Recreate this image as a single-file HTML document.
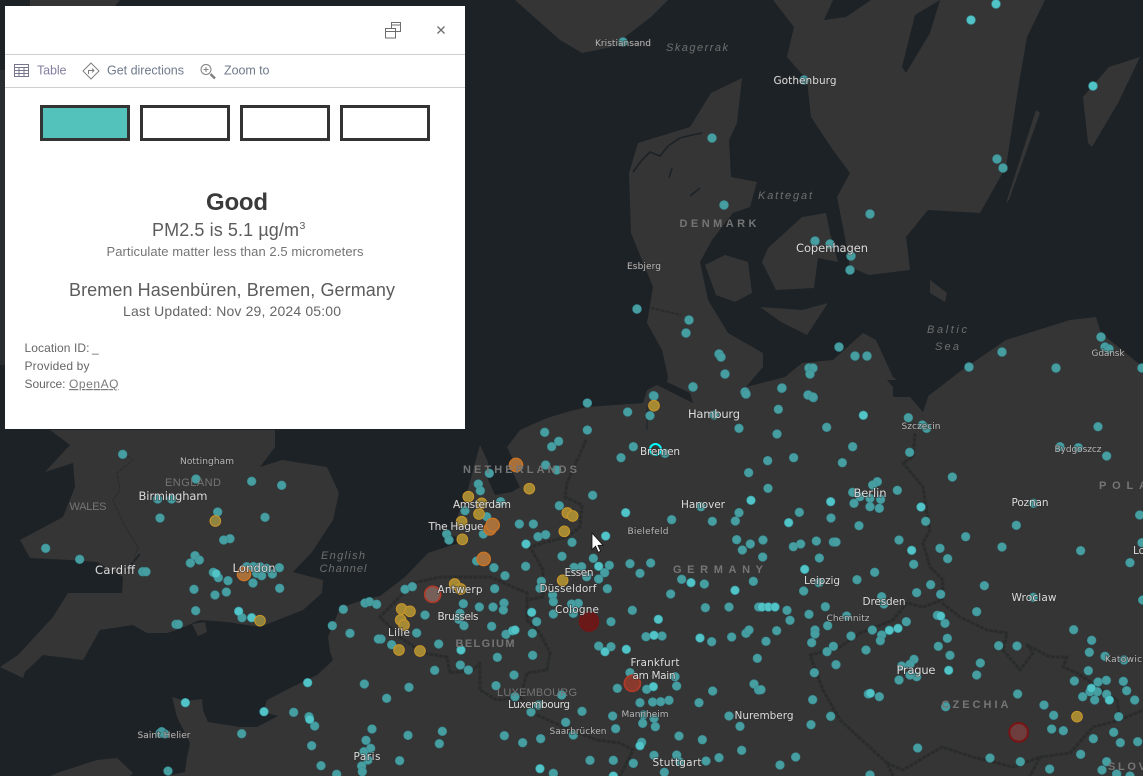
<!DOCTYPE html>
<html><head><meta charset="utf-8"><title>Air quality map</title>
<style>
html,body{margin:0;padding:0;background:#1c2226;width:1143px;height:776px;overflow:hidden}
svg{position:absolute;left:0;top:0;display:block}
text{font-family:"Liberation Sans",sans-serif}
text.c,text.m{font-family:"DejaVu Sans",sans-serif}
.c{fill:#dcdcdc;font-size:10.5px;text-anchor:middle;paint-order:stroke;stroke:#2e2e2e;stroke-width:1.5px;stroke-opacity:.6}
.l{font-size:11.5px}
.m{fill:#b8b8b8;font-size:9px;text-anchor:middle;paint-order:stroke;stroke:#2e2e2e;stroke-width:1.5px;stroke-opacity:.6}
.r{fill:#757575;font-size:11px;font-weight:bold;text-anchor:middle}
.q{fill:#6f6f6f;font-size:11px;font-style:italic;text-anchor:middle}
.p{fill:#6f7a8c;font-size:12.5px}
.z circle{r:13px}
.y circle{r:4.4px}
</style></head><body>
<svg width="1143" height="776" viewBox="0 0 1143 776" xmlns="http://www.w3.org/2000/svg">
<rect width="1143" height="776" fill="#1c2226"/>
<g fill="#353535">
<path d="M50,430L70,445L45,472L73,463L75,487L63,517L20,540L30,558L70,560L97,562L123,577L122,593L68,593L53,617L18,655L0,667L23,678L25,672L43,655L83,660L100,630L133,625L147,633L167,633L177,630L200,620L227,622L260,627L303,610L322,593L323,580L293,572L312,552L333,520L339,493L327,467L282,460L260,467L275,447L275,430Z"/>
<path d="M192,624L205,622L207,632L198,636Z"/>
<path d="M50,776L60,772L97,760L117,758L133,773L130,776Z"/>
<path d="M167,776L185,772L187,757L190,743L177,717L172,697L185,701L202,699L203,710L208,722L240,727L257,727L278,716L263,712L267,700L290,688L317,675L328,665L333,660L330,652L328,637L333,625L340,608L363,600L380,596L405,577L428,553L443,543L452,530L467,493L475,463L480,445L488,462L487,477L495,495L512,492L520,487L513,473L513,460L507,447L520,430L547,418L567,412L587,407L643,403L647,390L657,385L673,393L693,403L690,393L667,382L668,377L662,350L647,323L653,287L631,233L629,173L638,143L690,127L711,93L742,78L737,123L729,140L731,177L757,182L750,207L733,213L712,240L700,262L708,300L728,333L763,353L763,367L746,387L785,377L802,363L833,360L863,333L876,340L893,377L910,390L923,400L962,370L1006,340L1070,320L1096,317L1101,333L1143,367L1143,776Z"/>
<path d="M705,265L725,255L748,262L752,293L735,302L716,295Z"/>
<path d="M762,262L768,248L790,228L802,217L826,213L830,233L838,262L818,258L814,288L776,290Z"/>
<path d="M760,307L802,310L828,303L807,335L781,322Z"/>
<path d="M773,0L794,27L787,57L807,80L811,117L833,150L850,173L837,197L841,217L846,243L850,267L869,275L910,270L906,237L928,210L980,213L1006,167L1019,83L1027,37L1045,0Z"/>
<path d="M1036,110L1006,203L1009,200L1040,113Z"/>
<path d="M1140,57L1109,67L1083,97L1088,143L1092,147L1118,103Z"/>
<path d="M930,280L947,293L945,302L930,293Z"/>
<path d="M515,0L534,17L560,40L582,53L612,47L651,17L668,0Z"/>
<path d="M30,0L120,0L115,6L30,6Z"/>
<path d="M0,70H5V365H0Z" fill="#2b2e30"/>
</g>
<g fill="#1c2226">
<path d="M833,0L824,20L846,17L871,0Z"/>
<path d="M940,0L915,15L902,67L906,73L930,33Z"/>
<path d="M887,380L933,380L927,400L923,412L910,397L893,397L893,387Z"/>
<path d="M428,553L452,545L470,540L452,536L443,543Z"/>
</g>
<g fill="none" stroke="#1c2226">
<path d="M633,172L642,160L650,152L660,156L668,146L680,138L692,135L702,133" stroke-width="1.6"/>
<path d="M647,407V430" stroke-width="1"/>
<path d="M669,178L672,168M690,196L700,188" stroke-width="1.5"/>
<path d="M140,554L125,572" stroke-width="1.5"/>
</g>
<g fill="none" stroke="#2a2b2b" stroke-width="3" stroke-linejoin="round" stroke-dasharray="4 1">
<path d="M586,440L567,483L565,497L582,505L580,527L567,537L543,543L530,547L543,570L543,597L527,600"/>
<path d="M527,600L527,593L513,587L490,577L463,577L440,577L413,583L380,617L400,637L423,653L447,657L450,673L473,670L480,663L480,690L497,700L520,697"/>
<path d="M520,697L527,673L547,670L550,653L540,633L527,620L527,600"/>
<path d="M520,697L533,713L563,727L597,740L620,743L633,750L620,776"/>
<path d="M915,433L913,457L903,463L923,487L927,513L930,530L923,543L930,567L943,580L942,600L923,607L907,603L893,620L860,633L840,647L810,655L823,690L840,720L887,763L893,776"/>
<path d="M942,603L960,617L987,630L1007,633L1003,650L1020,670L1033,653L1027,645L1050,657L1067,657L1063,667L1077,673L1117,700L1120,720L1143,710"/>
<path d="M887,763L903,770L942,747L973,757L1013,767L1040,757L1070,753L1093,727L1120,720"/>
<path d="M1040,757L1030,776"/>
<path d="M651,308L681,315" stroke-width="2"/>
<path d="M123,453L133,460L117,473L120,490L113,500L123,523L138,547L133,563" stroke-width="1"/>
</g>

<g class="z" transform="translate(380 380) scale(.33333)" fill="#479ea1" stroke="#3a8f96" stroke-width="2">
<circle cx="820" cy="47" r="12"/><circle cx="939" cy="20" r="12"/><circle cx="1096" cy="38" r="12"/><circle cx="622" cy="69" r="12"/><circle cx="743" cy="96" r="12"/><circle cx="810" cy="107" r="12"/><circle cx="1003" cy="105" r="12"/><circle cx="622" cy="150" r="12"/><circle cx="494" cy="157" r="12"/><circle cx="1077" cy="145" r="12"/><circle cx="536" cy="184" r="12"/><circle cx="515" cy="200" r="12"/><circle cx="760" cy="200" r="12"/><circle cx="723" cy="233" r="12"/><circle cx="855" cy="220" r="12"/><circle cx="1106" cy="278" r="12"/><circle cx="497" cy="255" r="12"/><circle cx="530" cy="270" r="12"/><circle cx="328" cy="280" r="12"/><circle cx="295" cy="312" r="12"/><circle cx="301" cy="332" r="12"/><circle cx="362" cy="365" r="12"/><circle cx="638" cy="346" r="12"/><circle cx="538" cy="377" r="12"/><circle cx="255" cy="392" r="12"/><circle cx="320" cy="410" r="12"/><circle cx="875" cy="419" r="12"/><circle cx="997" cy="424" r="12"/><circle cx="1077" cy="398" r="12"/><circle cx="1066" cy="423" r="12"/><circle cx="963" cy="380" r="12"/><circle cx="418" cy="432" r="12"/><circle cx="460" cy="432" r="12"/><circle cx="200" cy="462" r="12"/><circle cx="207" cy="480" r="12"/><circle cx="474" cy="470" r="12"/><circle cx="497" cy="464" r="12"/><circle cx="310" cy="462" r="12"/><circle cx="576" cy="487" r="12"/><circle cx="1070" cy="479" r="12"/><circle cx="1111" cy="492" r="12"/><circle cx="1087" cy="510" r="12"/><circle cx="546" cy="529" r="12"/><circle cx="640" cy="535" r="12"/><circle cx="290" cy="543" r="12"/><circle cx="342" cy="563" r="12"/><circle cx="437" cy="559" r="12"/><circle cx="750" cy="551" r="12"/><circle cx="812" cy="549" r="12"/><circle cx="688" cy="556" r="12"/><circle cx="605" cy="560" r="12"/><circle cx="582" cy="562" r="12"/><circle cx="674" cy="578" r="12"/><circle cx="780" cy="580" r="12"/><circle cx="375" cy="587" r="12"/><circle cx="905" cy="598" r="12"/><circle cx="973" cy="612" r="12"/><circle cx="656" cy="597" r="12"/><circle cx="620" cy="590" r="12"/><circle cx="484" cy="604" r="12"/><circle cx="1120" cy="604" r="12"/><circle cx="75" cy="628" r="12"/><circle cx="97" cy="620" r="12"/><circle cx="344" cy="626" r="12"/><circle cx="682" cy="626" r="12"/><circle cx="480" cy="625" r="12"/><circle cx="872" cy="642" r="12"/><circle cx="518" cy="645" r="12"/><circle cx="520" cy="665" r="12"/><circle cx="372" cy="669" r="12"/><circle cx="370" cy="690" r="12"/><circle cx="339" cy="681" r="12"/><circle cx="298" cy="681" r="12"/><circle cx="250" cy="671" r="12"/><circle cx="976" cy="683" r="12"/><circle cx="1047" cy="681" r="12"/><circle cx="757" cy="691" r="12"/><circle cx="1136" cy="681" r="12"/><circle cx="595" cy="670" r="12"/><circle cx="575" cy="672" r="12"/><circle cx="580" cy="700" r="12"/><circle cx="520" cy="702" r="12"/><circle cx="135" cy="705" r="12"/><circle cx="240" cy="700" r="12"/><circle cx="236" cy="718" r="12"/><circle cx="470" cy="725" r="12"/><circle cx="693" cy="725" r="12"/><circle cx="252" cy="737" r="12"/><circle cx="335" cy="739" r="12"/><circle cx="110" cy="759" r="12"/><circle cx="378" cy="763" r="12"/><circle cx="457" cy="760" r="12"/><circle cx="995" cy="785" r="12"/><circle cx="1055" cy="771" r="12"/><circle cx="1098" cy="760" r="12"/><circle cx="1107" cy="750" r="12"/><circle cx="798" cy="770" r="12"/><circle cx="846" cy="768" r="12"/><circle cx="3" cy="777" r="12"/><circle cx="35" cy="794" r="12"/><circle cx="176" cy="792" r="12"/><circle cx="656" cy="798" r="12"/><circle cx="693" cy="800" r="12"/><circle cx="352" cy="832" r="12"/><circle cx="458" cy="826" r="12"/><circle cx="1132" cy="835" r="12"/><circle cx="241" cy="855" r="12"/><circle cx="265" cy="870" r="12"/><circle cx="164" cy="871" r="12"/><circle cx="402" cy="885" r="12"/><circle cx="750" cy="878" r="12"/><circle cx="885" cy="890" r="12"/><circle cx="890" cy="918" r="12"/><circle cx="712" cy="925" r="12"/><circle cx="800" cy="928" r="12"/><circle cx="348" cy="917" r="12"/><circle cx="87" cy="922" r="12"/><circle cx="20" cy="955" r="12"/><circle cx="998" cy="933" r="12"/><circle cx="1122" cy="912" r="12"/><circle cx="1136" cy="930" r="12"/><circle cx="780" cy="968" r="12"/><circle cx="818" cy="966" r="12"/><circle cx="842" cy="965" r="12"/><circle cx="867" cy="961" r="12"/><circle cx="957" cy="968" r="12"/><circle cx="405" cy="950" r="12"/><circle cx="545" cy="945" r="12"/><circle cx="475" cy="975" r="12"/><circle cx="453" cy="996" r="12"/><circle cx="606" cy="994" r="12"/><circle cx="698" cy="1008" r="12"/><circle cx="790" cy="1005" r="12"/><circle cx="822" cy="1015" r="12"/><circle cx="1047" cy="1008" r="12"/><circle cx="557" cy="1027" r="12"/><circle cx="788" cy="1030" r="12"/><circle cx="826" cy="1040" r="12"/><circle cx="707" cy="1046" r="12"/><circle cx="1080" cy="1039" r="12"/><circle cx="580" cy="1065" r="12"/><circle cx="373" cy="1067" r="12"/><circle cx="84" cy="1066" r="12"/><circle cx="187" cy="1054" r="12"/><circle cx="178" cy="1091" r="12"/><circle cx="428" cy="1088" r="12"/><circle cx="482" cy="1076" r="12"/><circle cx="897" cy="1068" r="12"/><circle cx="967" cy="1079" r="12"/><circle cx="785" cy="1087" r="12"/><circle cx="1085" cy="1111" r="12"/><circle cx="1017" cy="1133" r="12"/><circle cx="978" cy="1143" r="12"/><circle cx="890" cy="1125" r="12"/><circle cx="822" cy="1126" r="12"/><circle cx="59" cy="1142" r="12"/><circle cx="630" cy="1141" r="12"/><circle cx="700" cy="1141" r="12"/><circle cx="760" cy="1150" r="12"/><circle cx="898" cy="1145" r="12"/><circle cx="853" cy="1177" r="12"/><circle cx="520" cy="1180" r="12"/>
</g>
<g class="z" transform="translate(380 380) scale(.33333)" fill="#52c4c7" stroke="#3a9aa0" stroke-width="2">
<circle cx="1113" cy="361" r="12"/><circle cx="737" cy="398" r="12"/><circle cx="677" cy="468" r="12"/><circle cx="438" cy="492" r="12"/><circle cx="656" cy="559" r="12"/><circle cx="933" cy="608" r="12"/><circle cx="1065" cy="631" r="12"/><circle cx="455" cy="697" r="12"/><circle cx="835" cy="718" r="12"/><circle cx="398" cy="752" r="12"/><circle cx="405" cy="750" r="12"/><circle cx="960" cy="774" r="12"/><circle cx="822" cy="766" r="12"/><circle cx="243" cy="810" r="12"/><circle cx="739" cy="808" r="12"/><circle cx="675" cy="815" r="12"/><circle cx="820" cy="920" r="12"/><circle cx="780" cy="1097" r="12"/><circle cx="480" cy="1166" r="12"/><circle cx="700" cy="1188" r="12"/>
</g>
<g class="z" transform="translate(760 380) scale(.33333)" fill="#479ea1" stroke="#3a8f96" stroke-width="2">
<circle cx="65" cy="25" r="12"/><circle cx="145" cy="45" r="12"/><circle cx="160" cy="53" r="12"/><circle cx="55" cy="88" r="12"/><circle cx="200" cy="142" r="12"/><circle cx="51" cy="162" r="12"/><circle cx="445" cy="113" r="12"/><circle cx="487" cy="135" r="12"/><circle cx="500" cy="145" r="12"/><circle cx="1014" cy="140" r="12"/><circle cx="278" cy="200" r="12"/><circle cx="900" cy="200" r="12"/><circle cx="955" cy="203" r="12"/><circle cx="1040" cy="228" r="12"/><circle cx="101" cy="233" r="12"/><circle cx="23" cy="242" r="12"/><circle cx="247" cy="248" r="12"/><circle cx="449" cy="217" r="12"/><circle cx="577" cy="291" r="12"/><circle cx="24" cy="325" r="12"/><circle cx="412" cy="331" r="12"/><circle cx="352" cy="305" r="12"/><circle cx="338" cy="315" r="12"/><circle cx="278" cy="337" r="12"/><circle cx="330" cy="355" r="12"/><circle cx="300" cy="350" r="12"/><circle cx="362" cy="358" r="12"/><circle cx="330" cy="380" r="12"/><circle cx="358" cy="385" r="12"/><circle cx="282" cy="370" r="12"/><circle cx="118" cy="397" r="12"/><circle cx="213" cy="414" r="12"/><circle cx="297" cy="437" r="12"/><circle cx="497" cy="424" r="12"/><circle cx="769" cy="436" r="12"/><circle cx="1139" cy="405" r="12"/><circle cx="820" cy="370" r="12"/><circle cx="617" cy="470" r="12"/><circle cx="726" cy="501" r="12"/><circle cx="9" cy="480" r="12"/><circle cx="100" cy="500" r="12"/><circle cx="122" cy="492" r="12"/><circle cx="169" cy="483" r="12"/><circle cx="220" cy="486" r="12"/><circle cx="228" cy="486" r="12"/><circle cx="417" cy="480" r="12"/><circle cx="540" cy="505" r="12"/><circle cx="563" cy="536" r="12"/><circle cx="962" cy="512" r="12"/><circle cx="1110" cy="548" r="12"/><circle cx="1146" cy="488" r="12"/><circle cx="8" cy="531" r="12"/><circle cx="178" cy="534" r="12"/><circle cx="461" cy="553" r="12"/><circle cx="344" cy="577" r="12"/><circle cx="291" cy="599" r="12"/><circle cx="177" cy="608" r="12"/><circle cx="673" cy="617" r="12"/><circle cx="512" cy="614" r="12"/><circle cx="131" cy="633" r="12"/><circle cx="470" cy="638" r="12"/><circle cx="542" cy="643" r="12"/><circle cx="365" cy="650" r="12"/><circle cx="372" cy="672" r="12"/><circle cx="820" cy="652" r="12"/><circle cx="1148" cy="660" r="12"/><circle cx="196" cy="680" r="12"/><circle cx="650" cy="695" r="12"/><circle cx="81" cy="691" r="12"/><circle cx="90" cy="721" r="12"/><circle cx="147" cy="703" r="12"/><circle cx="260" cy="708" r="12"/><circle cx="532" cy="706" r="12"/><circle cx="555" cy="730" r="12"/><circle cx="439" cy="725" r="12"/><circle cx="203" cy="737" r="12"/><circle cx="50" cy="752" r="12"/><circle cx="165" cy="750" r="12"/><circle cx="165" cy="762" r="12"/><circle cx="337" cy="750" r="12"/><circle cx="365" cy="765" r="12"/><circle cx="361" cy="782" r="12"/><circle cx="273" cy="768" r="12"/><circle cx="18" cy="784" r="12"/><circle cx="155" cy="788" r="12"/><circle cx="220" cy="799" r="12"/><circle cx="201" cy="815" r="12"/><circle cx="318" cy="810" r="12"/><circle cx="562" cy="775" r="12"/><circle cx="535" cy="799" r="12"/><circle cx="716" cy="797" r="12"/><circle cx="771" cy="798" r="12"/><circle cx="941" cy="749" r="12"/><circle cx="995" cy="781" r="12"/><circle cx="988" cy="817" r="12"/><circle cx="1035" cy="829" r="12"/><circle cx="1092" cy="840" r="12"/><circle cx="570" cy="826" r="12"/><circle cx="462" cy="838" r="12"/><circle cx="425" cy="858" r="12"/><circle cx="450" cy="853" r="12"/><circle cx="228" cy="854" r="12"/><circle cx="661" cy="849" r="12"/><circle cx="163" cy="878" r="12"/><circle cx="985" cy="872" r="12"/><circle cx="650" cy="885" r="12"/><circle cx="470" cy="890" r="12"/><circle cx="450" cy="885" r="12"/><circle cx="417" cy="900" r="12"/><circle cx="943" cy="903" r="12"/><circle cx="1014" cy="906" r="12"/><circle cx="1039" cy="901" r="12"/><circle cx="1090" cy="904" r="12"/><circle cx="1100" cy="932" r="12"/><circle cx="990" cy="935" r="12"/><circle cx="1012" cy="935" r="12"/><circle cx="1040" cy="943" r="12"/><circle cx="968" cy="950" r="12"/><circle cx="1004" cy="960" r="12"/><circle cx="1124" cy="960" r="12"/><circle cx="773" cy="942" r="12"/><circle cx="325" cy="942" r="12"/><circle cx="358" cy="950" r="12"/><circle cx="3" cy="929" r="12"/><circle cx="158" cy="959" r="12"/><circle cx="852" cy="975" r="12"/><circle cx="557" cy="980" r="12"/><circle cx="881" cy="1006" r="12"/><circle cx="1076" cy="1010" r="12"/><circle cx="212" cy="1009" r="12"/><circle cx="153" cy="1034" r="12"/><circle cx="875" cy="1047" r="12"/><circle cx="910" cy="1052" r="12"/><circle cx="1061" cy="1057" r="12"/><circle cx="1000" cy="1076" r="12"/><circle cx="1081" cy="1088" r="12"/><circle cx="1133" cy="1085" r="12"/><circle cx="473" cy="1104" r="12"/><circle cx="962" cy="1123" r="12"/><circle cx="107" cy="1131" r="12"/><circle cx="60" cy="1155" r="12"/><circle cx="690" cy="1134" r="12"/><circle cx="781" cy="1145" r="12"/><circle cx="869" cy="1167" r="12"/><circle cx="1040" cy="1145" r="12"/><circle cx="1026" cy="1170" r="12"/><circle cx="1070" cy="1182" r="12"/><circle cx="330" cy="1185" r="12"/><circle cx="1110" cy="1188" r="12"/>
</g>
<g class="z" transform="translate(760 380) scale(.33333)" fill="#52c4c7" stroke="#3a9aa0" stroke-width="2">
<circle cx="310" cy="106" r="12"/><circle cx="212" cy="365" r="12"/><circle cx="483" cy="381" r="12"/><circle cx="86" cy="428" r="12"/><circle cx="455" cy="511" r="12"/><circle cx="134" cy="568" r="12"/><circle cx="6" cy="681" r="12"/><circle cx="25" cy="681" r="12"/><circle cx="45" cy="681" r="12"/><circle cx="542" cy="708" r="12"/><circle cx="388" cy="751" r="12"/><circle cx="414" cy="745" r="12"/><circle cx="566" cy="871" r="12"/><circle cx="994" cy="925" r="12"/><circle cx="1048" cy="960" r="12"/><circle cx="331" cy="940" r="12"/>
</g>
<g class="z" transform="translate(0 430) scale(.33333)" fill="#479ea1" stroke="#3a8f96" stroke-width="2">
<circle cx="368" cy="73" r="12"/><circle cx="588" cy="147" r="12"/><circle cx="755" cy="154" r="12"/><circle cx="845" cy="166" r="12"/><circle cx="473" cy="207" r="12"/><circle cx="515" cy="207" r="12"/><circle cx="653" cy="246" r="12"/><circle cx="480" cy="264" r="12"/><circle cx="795" cy="262" r="12"/><circle cx="690" cy="326" r="12"/><circle cx="671" cy="330" r="12"/><circle cx="137" cy="355" r="12"/><circle cx="239" cy="388" r="12"/><circle cx="585" cy="377" r="12"/><circle cx="598" cy="390" r="12"/><circle cx="571" cy="399" r="12"/><circle cx="428" cy="425" r="12"/><circle cx="438" cy="425" r="12"/><circle cx="640" cy="427" r="12"/><circle cx="655" cy="443" r="12"/><circle cx="684" cy="452" r="12"/><circle cx="740" cy="410" r="12"/><circle cx="760" cy="410" r="12"/><circle cx="780" cy="410" r="12"/><circle cx="800" cy="415" r="12"/><circle cx="838" cy="413" r="12"/><circle cx="770" cy="430" r="12"/><circle cx="785" cy="437" r="12"/><circle cx="817" cy="432" r="12"/><circle cx="759" cy="459" r="12"/><circle cx="582" cy="478" r="12"/><circle cx="679" cy="486" r="12"/><circle cx="645" cy="495" r="12"/><circle cx="839" cy="475" r="12"/><circle cx="587" cy="542" r="12"/><circle cx="726" cy="563" r="12"/><circle cx="1095" cy="519" r="12"/><circle cx="1108" cy="515" r="12"/><circle cx="1130" cy="523" r="12"/><circle cx="1030" cy="538" r="12"/><circle cx="997" cy="587" r="12"/><circle cx="1050" cy="610" r="12"/><circle cx="1135" cy="627" r="12"/><circle cx="528" cy="583" r="12"/><circle cx="535" cy="583" r="12"/><circle cx="1093" cy="762" r="12"/><circle cx="881" cy="847" r="12"/><circle cx="927" cy="860" r="12"/><circle cx="944" cy="888" r="12"/><circle cx="1116" cy="897" r="12"/><circle cx="725" cy="911" r="12"/><circle cx="485" cy="905" r="12"/><circle cx="480" cy="910" r="12"/><circle cx="495" cy="912" r="12"/><circle cx="935" cy="947" r="12"/><circle cx="1098" cy="931" r="12"/><circle cx="1112" cy="955" r="12"/><circle cx="1092" cy="965" r="12"/><circle cx="1085" cy="1008" r="12"/><circle cx="1104" cy="990" r="12"/><circle cx="963" cy="1007" r="12"/><circle cx="504" cy="1023" r="12"/><circle cx="1010" cy="1033" r="12"/><circle cx="1087" cy="1025" r="12"/>
</g>
<g class="z" transform="translate(0 430) scale(.33333)" fill="#52c4c7" stroke="#3a9aa0" stroke-width="2">
<circle cx="648" cy="431" r="12"/><circle cx="716" cy="544" r="12"/><circle cx="755" cy="563" r="12"/><circle cx="923" cy="758" r="12"/><circle cx="792" cy="845" r="12"/><circle cx="929" cy="868" r="12"/><circle cx="556" cy="818" r="12"/>
</g>
<g class="y" fill="#479ea1" stroke="#3a8f96" stroke-width=".7">
<circle cx="712" cy="138" r="4"/><circle cx="997" cy="159" r="4"/><circle cx="1003" cy="168" r="4"/><circle cx="724" cy="205" r="4"/><circle cx="870" cy="214" r="4"/><circle cx="815" cy="241" r="4"/><circle cx="830" cy="244" r="4"/><circle cx="851" cy="256" r="4"/><circle cx="850" cy="270" r="4"/><circle cx="637" cy="309" r="4"/><circle cx="689" cy="320" r="4"/><circle cx="686" cy="333" r="4"/><circle cx="719" cy="354" r="4"/><circle cx="721" cy="357" r="4"/><circle cx="725" cy="374" r="4"/><circle cx="693" cy="387" r="4"/><circle cx="745" cy="392" r="4"/><circle cx="746" cy="394" r="4"/><circle cx="782" cy="388" r="4"/><circle cx="839" cy="347" r="4"/><circle cx="855" cy="356" r="4"/><circle cx="867" cy="356" r="4"/><circle cx="809" cy="368" r="4"/><circle cx="813" cy="368" r="4"/><circle cx="810" cy="374" r="4"/><circle cx="808" cy="395" r="4"/><circle cx="813" cy="397" r="4"/><circle cx="969" cy="367" r="4"/><circle cx="1002" cy="352" r="4"/><circle cx="1056" cy="368" r="4"/><circle cx="1101" cy="337" r="4"/><circle cx="1105" cy="347" r="4"/><circle cx="1109" cy="349" r="4"/><circle cx="1142" cy="368" r="4"/><circle cx="654" cy="396" r="4"/><circle cx="623" cy="42" r="4"/><circle cx="804" cy="80" r="4"/>
</g>
<g class="y" fill="#52c4c7" stroke="#3a9aa0" stroke-width=".7">
<circle cx="996" cy="4" r="4"/><circle cx="971" cy="20" r="4"/><circle cx="1093" cy="86" r="4"/>
</g>
<g transform="translate(380 380) scale(.33333)" fill="#a68a33" stroke="#c9962a" stroke-width="3">
<circle cx="822" cy="77" r="16"/><circle cx="448" cy="326" r="16"/><circle cx="562" cy="399" r="16"/><circle cx="578" cy="408" r="16"/><circle cx="553" cy="454" r="16"/><circle cx="548" cy="601" r="16"/><circle cx="265" cy="350" r="16"/><circle cx="305" cy="370" r="16"/><circle cx="297" cy="402" r="16"/><circle cx="245" cy="425" r="16"/><circle cx="247" cy="478" r="16"/><circle cx="224" cy="612" r="16"/><circle cx="242" cy="627" r="16"/><circle cx="65" cy="687" r="16"/><circle cx="90" cy="694" r="16"/><circle cx="62" cy="720" r="16"/><circle cx="72" cy="735" r="16"/><circle cx="57" cy="810" r="16"/><circle cx="120" cy="813" r="16"/>
</g>
<g transform="translate(380 380) scale(.33333)" fill="#a8703a" stroke="#cc7424" stroke-width="4">
<circle cx="408" cy="255" r="20"/><circle cx="330" cy="447" r="18"/><circle cx="338" cy="435" r="20"/><circle cx="311" cy="537" r="20"/>
</g>
<g transform="translate(380 380) scale(.33333)">
<circle cx="158" cy="643" r="24" fill="#77605a" stroke="#b03a2a" stroke-width="5"/>
<circle cx="757" cy="910" r="24" fill="#8a3a2c" stroke="#b03a2a" stroke-width="5"/>
<circle cx="627" cy="725" r="29" fill="#6a1818" stroke="#761414" stroke-width="3"/>
</g>
<g transform="translate(760 380) scale(.33333)">
<circle cx="776" cy="1057" r="28" fill="#6e3e3e" stroke="#7a1414" stroke-width="6"/>
<circle cx="951" cy="1010" r="16" fill="#a68a33" stroke="#c9962a" stroke-width="3"/>
</g>
<g transform="translate(0 430) scale(.33333)">
<circle cx="646" cy="273" r="16" fill="#8f8440" stroke="#c9962a" stroke-width="3"/>
<circle cx="780" cy="572" r="16" fill="#8f8440" stroke="#c9962a" stroke-width="3"/>
<circle cx="732" cy="432" r="20" fill="#a8703a" stroke="#cc7424" stroke-width="4"/>
</g>
<circle cx="655.5" cy="449.5" r="5.5" fill="none" stroke="#00ffff" stroke-width="2"/>

<text class="m" x="623" y="46" textLength="56">Kristiansand</text>
<text class="q" x="697" y="51" textLength="62">Skagerrak</text>
<text class="c" x="805" y="84" textLength="63">Gothenburg</text>
<text class="q" x="785" y="199" textLength="54">Kattegat</text>
<text class="r" x="718" y="227" textLength="77">DENMARK</text>
<text class="m" x="644" y="269" textLength="34">Esbjerg</text>
<text class="c l" x="832" y="252" textLength="72">Copenhagen</text>
<text class="q" x="947" y="333" textLength="40">Baltic</text>
<text class="q" x="947" y="350" textLength="24">Sea</text>
<text class="m" x="1108" y="356" textLength="33">Gdansk</text>
<text class="c l" x="714" y="418" textLength="52">Hamburg</text>
<text class="c" x="660" y="455" textLength="40">Bremen</text>
<text class="m" x="921" y="429" textLength="39">Szczecin</text>
<text class="m" x="1078" y="452" textLength="47">Bydgoszcz</text>
<text class="r" x="520" y="473" textLength="114">NETHERLANDS</text>
<text class="c" x="482" y="508" textLength="58">Amsterdam</text>
<text class="c" x="456" y="530" textLength="55">The Hague</text>
<text class="c" x="703" y="508" textLength="44">Hanover</text>
<text class="m" x="648" y="534" textLength="41">Bielefeld</text>
<text class="c l" x="870" y="497" textLength="33">Berlin</text>
<text class="c" x="1030" y="506" textLength="37">Poznan</text>
<text class="r" x="1099" y="489" textLength="48" style="text-anchor:start">POLA</text>
<text class="c l" x="173" y="500" textLength="69">Birmingham</text>
<text class="m" x="207" y="464" textLength="54">Nottingham</text>
<text class="r" x="193" y="486" textLength="56" style="font-weight:normal">ENGLAND</text>
<text class="r" x="88" y="510" textLength="37" style="font-weight:normal">WALES</text>
<text class="q" x="343" y="559" textLength="44">English</text>
<text class="q" x="343" y="572" textLength="47">Channel</text>
<text class="c l" x="115" y="574" textLength="40">Cardiff</text>
<text class="c l" x="254" y="572" textLength="43">London</text>
<text class="c" x="579" y="576" textLength="29">Essen</text>
<text class="r" x="718" y="573" textLength="90">GERMANY</text>
<text class="c" x="568" y="592" textLength="57">Düsseldorf</text>
<text class="c" x="822" y="584" textLength="36">Leipzig</text>
<text class="c" x="460" y="593" textLength="45">Antwerp</text>
<text class="c" x="577" y="613" textLength="44">Cologne</text>
<text class="c" x="884" y="605" textLength="43">Dresden</text>
<text class="c" x="1034" y="601" textLength="45">Wroclaw</text>
<text class="c" x="458" y="620" textLength="41">Brussels</text>
<text class="m" x="848" y="621" textLength="43">Chemnitz</text>
<text class="c" x="399" y="636" textLength="22">Lille</text>
<text class="r" x="485" y="647" textLength="59">BELGIUM</text>
<text class="c" x="655" y="666" textLength="49">Frankfurt</text>
<text class="c" x="654" y="679" textLength="43">am Main</text>
<text class="c l" x="916" y="674" textLength="39">Prague</text>
<text class="r" x="537" y="696" textLength="80" style="font-weight:normal">LUXEMBOURG</text>
<text class="c" x="539" y="708" textLength="62">Luxembourg</text>
<text class="r" x="975" y="708" textLength="67">CZECHIA</text>
<text class="m" x="645" y="717" textLength="47">Mannheim</text>
<text class="c" x="764" y="719" textLength="59">Nuremberg</text>
<text class="m" x="164" y="738" textLength="53">Saint Helier</text>
<text class="m" x="578" y="734" textLength="57">Saarbrücken</text>
<text class="c" x="367" y="760" textLength="27">Paris</text>
<text class="c" x="677" y="766" textLength="49">Stuttgart</text>
<text class="r" x="1108" y="770" textLength="38" style="text-anchor:start">SLOV</text>
<text class="c" x="1133" y="554" style="text-anchor:start">Lo</text>
<text class="m" x="1105" y="662" style="text-anchor:start" textLength="43">Katowice</text>

<path d="M592 533V549.5L595.6 546.2L598.2 552.3L600.6 551.2L598 545.4L603 545.2Z" fill="#fff" stroke="#111" stroke-width=".8"/>

<rect x="5" y="6" width="460" height="423" fill="#fff"/>
<rect x="5" y="54" width="460" height="1" fill="#cfcfcf"/>
<rect x="5" y="87" width="460" height="1" fill="#cfcfcf"/>
<g fill="none" stroke="#6e6e6e" stroke-width="1">
<path d="M391.5 28V22.5H400.5V31.5H396M391.5 25H400.5"/>
<rect x="385.5" y="28.5" width="10" height="9.5"/><path d="M385.5 31.5H395.5"/>
<path d="M437.5 26.5L444.5 33.5M444.5 26.5L437.5 33.5" stroke-width="1.3"/>
</g>
<path d="M14.5 64.5H28.5V76.5H14.5ZM14.5 67.5H28.5M14.5 70.5H28.5M14.5 73.5H28.5M19 67.5V76.5M24 67.5V76.5" fill="none" stroke="#76768e" stroke-width="1"/>
<g fill="none" stroke="#808080" stroke-width="1">
<path d="M91 63L99 71L91 79L83 71Z"/>
<path d="M88.5 74V70.5H93.5M92 68.5L94 70.5L92 72.5"/>
<circle cx="206" cy="69.5" r="5"/><path d="M203.5 69.5H208.5M206 67V72"/>
<path d="M210.5 74L215 78.5" stroke-width="2.4"/>
</g>
<text class="p" x="37" y="74.5" textLength="29.5" style="fill:#837fa0">Table</text>
<text class="p" x="107" y="74.5" textLength="77">Get directions</text>
<text class="p" x="224" y="74.5" textLength="45.5">Zoom to</text>

<rect x="41.5" y="106.5" width="87" height="33" fill="#52c2bb" stroke="#333" stroke-width="3"/>
<rect x="141.5" y="106.5" width="87" height="33" fill="#fff" stroke="#333" stroke-width="3"/>
<rect x="241.5" y="106.5" width="87" height="33" fill="#fff" stroke="#333" stroke-width="3"/>
<rect x="341.5" y="106.5" width="87" height="33" fill="#fff" stroke="#333" stroke-width="3"/>

<text x="206" y="210" textLength="62" font-size="24" font-weight="bold" fill="#3a3a3a">Good</text>
<text x="152" y="236" textLength="147" font-size="18" fill="#5c5c5c">PM2.5 is 5.1 µg/m</text>
<text x="299.5" y="229" font-size="10.5" fill="#5c5c5c">3</text>
<text x="106.5" y="256" textLength="257" font-size="13" fill="#757575">Particulate matter less than 2.5 micrometers</text>
<text x="69" y="296" textLength="326" font-size="18" fill="#5c5c5c">Bremen Hasenbüren, Bremen, Germany</text>
<text x="123" y="316" textLength="218" font-size="14" fill="#666">Last Updated: Nov 29, 2024 05:00</text>
<text x="24.5" y="352" textLength="65" font-size="12" fill="#666">Location ID:</text>
<text x="92" y="352" font-size="12" fill="#666">_</text>
<text x="24.5" y="370" textLength="65" font-size="12" fill="#666">Provided by</text>
<text x="24.5" y="388" textLength="41" font-size="12" fill="#666">Source:</text>
<text x="69" y="388" textLength="49.5" font-size="12" fill="#7a7a7a" text-decoration="underline">OpenAQ</text>
</svg>
</body></html>
